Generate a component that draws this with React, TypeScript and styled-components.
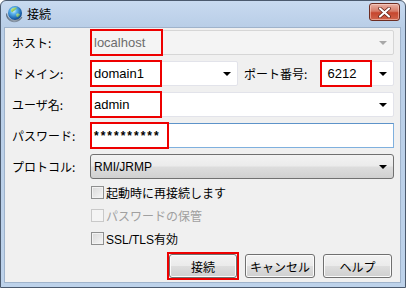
import React from 'react';
import styled, { createGlobalStyle } from 'styled-components';

const GlobalStyle = createGlobalStyle`
  html, body {
    margin: 0;
    padding: 0;
    background: #ffffff;
  }
  body {
    font-family: "Liberation Sans", "Noto Sans CJK JP", sans-serif;
    font-size: 12px;
    color: #000;
  }
  * {
    box-sizing: border-box;
  }
`;

const FONT_JP = `"Noto Sans CJK JP", "Liberation Sans", sans-serif`;

const Window = styled.div`
  width: 406px;
  height: 288px;
  display: flex;
  flex-direction: column;
  border: 1px solid #4b5a6e;
  border-radius: 6px 6px 0 0;
  background: linear-gradient(#c8daf0, #b9cee7 26px, #bdd2ea);
  padding: 0 4px 4px 3px;
  overflow: hidden;
`;

const TitleBar = styled.div`
  height: 26px;
  display: flex;
  align-items: center;
  padding-left: 1px;
  gap: 4px;
`;

const TitleText = styled.span`
  font-family: ${FONT_JP};
  font-size: 12px;
  color: #000;
  flex: 1;
  line-height: 1;
`;

const CloseButton = styled.div`
  width: 31px;
  height: 18px;
  margin-right: 1px;
  margin-top: -4px;
  border: 1px solid #6d2d22;
  border-radius: 3px;
  background: linear-gradient(#e9b1a5, #d67b68 45%, #c6462e 55%, #d0654c);
  box-shadow: inset 0 0 0 1px rgba(255, 220, 210, 0.5);
  display: flex;
  align-items: center;
  justify-content: center;
`;

const Content = styled.div`
  flex: 1;
  border: 1px solid #9fb3cb;
  background: #f0f0f0;
  padding: 2px 6px 0 7px;
  display: flex;
  flex-direction: column;
`;

const Form = styled.div`
  display: grid;
  grid-template-columns: 78px 1fr;
  grid-auto-rows: 25px;
  row-gap: 6px;
`;

const Label = styled.span<{ $width?: number }>`
  font-family: ${FONT_JP};
  font-size: 12px;
  display: flex;
  align-items: center;
  white-space: nowrap;
  ${(p) => (p.$width ? `width: ${p.$width}px; margin-left: 6px;` : '')}
`;

const Row = styled.div`
  display: flex;
  align-items: stretch;
`;

type Variant = 'disabled' | 'edit' | 'button' | 'text';

const Field = styled.div<{ $variant: Variant; $width?: number; $size?: number }>`
  position: relative;
  display: flex;
  align-items: center;
  height: 25px;
  padding-left: 3px;
  font-size: ${(p) => p.$size ?? 13}px;
  ${(p) => (p.$width ? `width: ${p.$width}px;` : 'flex: 1;')}
  ${(p) =>
    p.$variant === 'disabled'
      ? `background: #f4f4f4; border: 1px solid #d6d6d6; color: #6d6d6d; border-radius: 2px;`
      : p.$variant === 'edit'
      ? `background: #ffffff; border: 1px solid #e2e3ea; border-radius: 2px;`
      : p.$variant === 'text'
      ? `background: #ffffff; border: 1px solid #7fb0de; border-top-color: #5d93c9;`
      : `background: linear-gradient(#f3f3f3, #ebebeb 48%, #dddddd 52%, #d0d0d0);
         border: 1px solid #707070; border-radius: 3px;`}
`;

const Value = styled.span<{ $spaced?: boolean }>`
  flex: 1;
  white-space: nowrap;
  ${(p) => (p.$spaced ? 'letter-spacing: 2px; font-weight: 700; font-size: 12px;' : '')}
`;

const Arrow = styled.span<{ $disabled?: boolean }>`
  width: 0;
  height: 0;
  margin-right: 6px;
  border-left: 4px solid transparent;
  border-right: 4px solid transparent;
  border-top: 4px solid ${(p) => (p.$disabled ? '#a8a8a8' : '#000')};
`;

const Mark = styled.span<{ $width: number }>`
  position: absolute;
  left: -1px;
  top: -2px;
  bottom: -2px;
  width: ${(p) => p.$width}px;
  border: 2px solid #ee0000;
  pointer-events: none;
`;

const Checks = styled.div`
  margin-top: 2px;
  margin-left: 79px;
  display: flex;
  flex-direction: column;
  gap: 1px;
`;

const CheckRow = styled.label<{ $disabled?: boolean }>`
  height: 22px;
  display: flex;
  align-items: center;
  gap: 2px;
  font-size: 12px;
  color: ${(p) => (p.$disabled ? '#a0a0a0' : '#000')};
`;

const Box = styled.span<{ $disabled?: boolean }>`
  width: 13px;
  height: 13px;
  border: 1px solid ${(p) => (p.$disabled ? '#c9c9c9' : '#8e8f8f')};
  background: ${(p) =>
    p.$disabled ? '#f4f4f4' : 'linear-gradient(135deg, #d8d8d8, #f6f6f6)'};
  box-shadow: inset 0 0 0 1px ${(p) => (p.$disabled ? '#f4f4f4' : '#f2f2f2')};
`;

const ButtonBar = styled.div`
  margin-top: 3px;
  margin-right: 2px;
  display: flex;
  justify-content: flex-end;
  align-items: center;
  gap: 8px;
`;

const Highlight = styled.div`
  border: 2px solid #ee0000;
  padding: 0;
  margin-right: -2px;
  display: flex;
`;

const Button = styled.button<{ $width: number }>`
  width: ${(p) => p.$width}px;
  height: 24px;
  padding: 0;
  font-family: ${FONT_JP};
  font-size: 12px;
  color: #000;
  border: 1px solid #707070;
  border-radius: 3px;
  background: linear-gradient(#f2f2f2, #ebebeb 48%, #dddddd 52%, #cfcfcf);
  box-shadow: inset 0 0 0 1px #fbfbfb;
`;

const AppIcon = () => (
  <svg width="18" height="18" viewBox="0 0 18 18">
    <defs>
      <radialGradient id="globe" cx="0.4" cy="0.35" r="0.75">
        <stop offset="0" stopColor="#d6f4ff" />
        <stop offset="0.3" stopColor="#59b3ee" />
        <stop offset="0.75" stopColor="#1a5fa8" />
        <stop offset="1" stopColor="#0b3670" />
      </radialGradient>
      <linearGradient id="land" x1="0" y1="0" x2="1" y2="1">
        <stop offset="0" stopColor="#e4f79a" />
        <stop offset="1" stopColor="#3f9a34" />
      </linearGradient>
      <linearGradient id="ring" x1="0" y1="0" x2="1" y2="0">
        <stop offset="0" stopColor="#5f6d7c" />
        <stop offset="0.5" stopColor="#b8c3cf" />
        <stop offset="1" stopColor="#6a7888" />
      </linearGradient>
    </defs>
    <circle cx="10" cy="8" r="7" fill="url(#globe)" />
    <path d="M6 4.5 C7.3 2.6 10 2 12 2.8 C11 4.3 9 6.2 7.2 7.3 C6.1 6.8 5.6 5.6 6 4.5 Z" fill="url(#land)" />
    <path d="M11.5 9 C12.6 8.3 14.3 8.6 15 9.6 C14.6 11 13.4 12 12.2 12.2 C11.3 11.4 11 10 11.5 9 Z" fill="url(#land)" opacity="0.85" />
    <path d="M1.6 8.5 C0.6 13.5 5.5 17.6 11 16.6 C14 16 16.4 14.2 17 12 C14.6 14.6 10.5 15.7 7 15 C4.1 14.3 2 12 1.6 8.5 Z" fill="url(#ring)" stroke="#4c5866" strokeWidth="0.5" />
  </svg>
);

const CloseGlyph = () => (
  <svg width="13" height="11" viewBox="0 0 13 11">
    <path d="M2 1.5 L11 9.5 M11 1.5 L2 9.5" stroke="#5b1c12" strokeWidth="3.6" strokeLinecap="round" />
    <path d="M2 1.5 L11 9.5 M11 1.5 L2 9.5" stroke="#ffffff" strokeWidth="2.2" strokeLinecap="round" />
  </svg>
);

const App: React.FC = () => {
  return (
    <>
      <GlobalStyle />
      <Window>
        <TitleBar>
          <AppIcon />
          <TitleText>接続</TitleText>
          <CloseButton>
            <CloseGlyph />
          </CloseButton>
        </TitleBar>
        <Content>
          <Form>
            <Label>ホスト:</Label>
            <Field $variant="disabled">
              <Value>localhost</Value>
              <Arrow $disabled />
              <Mark $width={73} />
            </Field>

            <Label>ドメイン:</Label>
            <Row>
              <Field $variant="edit" $width={148}>
                <Value>domain1</Value>
                <Arrow />
                <Mark $width={72} />
              </Field>
              <Label $width={76}>ポート番号:</Label>
              <Field $variant="edit">
                <Value>&nbsp;6212</Value>
                <Arrow />
                <Mark $width={52} />
              </Field>
            </Row>

            <Label>ユーザ名:</Label>
            <Field $variant="edit">
              <Value>admin</Value>
              <Arrow />
              <Mark $width={72} />
            </Field>

            <Label>パスワード:</Label>
            <Field $variant="text">
              <Value $spaced>**********</Value>
              <Mark $width={79} />
            </Field>

            <Label>プロトコル:</Label>
            <Field $variant="button" $size={12}>
              <Value>RMI/JRMP</Value>
              <Arrow />
            </Field>
          </Form>

          <Checks>
            <CheckRow>
              <Box />
              起動時に再接続します
            </CheckRow>
            <CheckRow $disabled>
              <Box $disabled />
              パスワードの保管
            </CheckRow>
            <CheckRow>
              <Box />
              SSL/TLS有効
            </CheckRow>
          </Checks>

          <ButtonBar>
            <Highlight>
              <Button $width={68}>接続</Button>
            </Highlight>
            <Button $width={70}>キャンセル</Button>
            <Button $width={69}>ヘルプ</Button>
          </ButtonBar>
        </Content>
      </Window>
    </>
  );
};

export default App;
